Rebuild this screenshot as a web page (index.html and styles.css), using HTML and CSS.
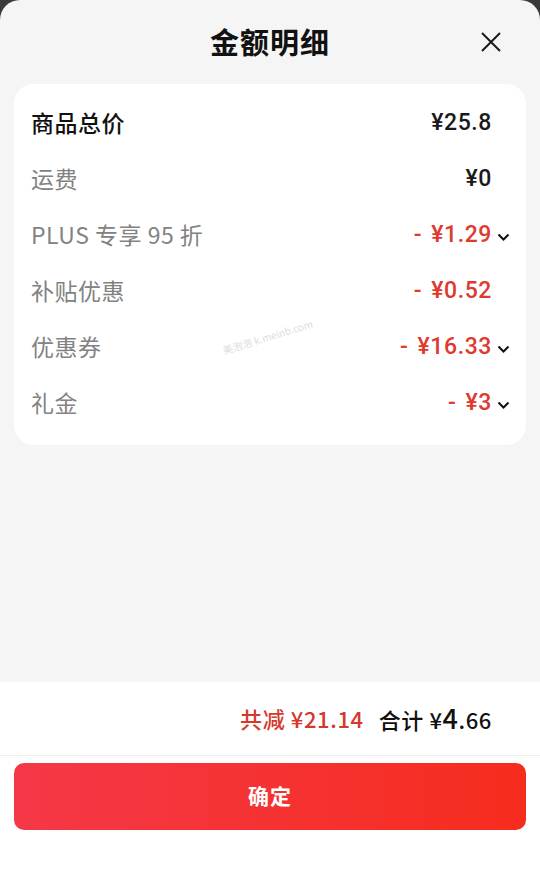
FILE: index.html
```html
<!DOCTYPE html>
<html lang="zh-CN">

<head>
    <meta charset="UTF-8">
    <meta name="viewport" content="width=device-width, initial-scale=1.0">
    <title>金额明细</title>
    <link rel="stylesheet" href="styles.css">
</head>

<body>
    <div class="sheet">
        <div class="head">
            <h1>金额明细</h1>
            <span class="close">
                <svg width="22" height="22" viewBox="0 0 22 22"><path d="M2 2L20 20M20 2L2 20" stroke="#1a1a1a" stroke-width="2" fill="none"/></svg>
            </span>
        </div>

        <div class="card">
            <div class="row main">
                <span class="label">商品总价</span>
                <span class="value">¥25.8</span>
                <span class="arrow"></span>
            </div>
            <div class="row">
                <span class="label">运费</span>
                <span class="value">¥0</span>
                <span class="arrow"></span>
            </div>
            <div class="row">
                <span class="label">PLUS 专享 95 折</span>
                <span class="value red"><i>-</i>¥1.29</span>
                <span class="arrow"><svg width="13" height="8" viewBox="0 0 13 8"><path d="M1.5 1.5l5 5 5-5" stroke="#111" stroke-width="2" fill="none"/></svg></span>
            </div>
            <div class="row">
                <span class="label">补贴优惠</span>
                <span class="value red"><i>-</i>¥0.52</span>
                <span class="arrow"></span>
            </div>
            <div class="row">
                <span class="label">优惠券</span>
                <span class="value red"><i>-</i>¥16.33</span>
                <span class="arrow"><svg width="13" height="8" viewBox="0 0 13 8"><path d="M1.5 1.5l5 5 5-5" stroke="#111" stroke-width="2" fill="none"/></svg></span>
            </div>
            <div class="row">
                <span class="label">礼金</span>
                <span class="value red"><i>-</i>¥3</span>
                <span class="arrow"><svg width="13" height="8" viewBox="0 0 13 8"><path d="M1.5 1.5l5 5 5-5" stroke="#111" stroke-width="2" fill="none"/></svg></span>
            </div>
            <div class="mark">美泡泡 k.meinb.com</div>
        </div>

        <div class="foot">
            <div class="total">
                <span class="cut">共减 ¥21.14</span>
                <span class="sum">合计 ¥<b>4</b>.66</span>
            </div>
            <div class="btn">确定</div>
        </div>
    </div>
</body>

</html>
```

FILE: styles.css
```css
* {
    box-sizing: border-box;
}

body {
    margin: 0;
    background-color: #3a3a3a;
    font-family: "Noto Sans CJK SC", "Noto Sans", sans-serif;
}

.sheet {
    height: 876px;
    display: flex;
    flex-direction: column;
    background-color: #f5f5f5;
    border-radius: 20px 20px 0 0;
    overflow: hidden;
}

.head {
    height: 84px;
    display: flex;
    align-items: center;
    justify-content: center;
    position: relative;
    padding-bottom: 2px;
}

.head h1 {
    margin: 0;
    font-size: 29px;
    font-weight: 700;
    color: #111;
    letter-spacing: 1px;
}

.close {
    position: absolute;
    right: 38px;
    top: 31px;
    line-height: 0;
}

.card {
    position: relative;
    margin: 0 14px;
    padding: 10px 16px 15px 17px;
    background-color: #fff;
    border-radius: 20px;
}

.row {
    height: 56px;
    display: flex;
    align-items: center;
}

.label {
    flex: 1;
    font-size: 23px;
    color: #828282;
    letter-spacing: 0.5px;
}

.value {
    font-family: "Roboto", "Noto Sans CJK SC", sans-serif;
    font-size: 23px;
    font-weight: 500;
    color: #1a1a1a;
    letter-spacing: 0.6px;
}

.value i {
    font-style: normal;
    margin-right: 9px;
}

.red {
    color: #de3a2f;
}

.arrow {
    width: 18px;
    display: flex;
    justify-content: flex-end;
    padding-top: 5px;
}

.main .label {
    color: #111;
    font-weight: 500;
}

.mark {
    position: absolute;
    left: 207px;
    top: 245px;
    font-size: 10px;
    color: #ddd;
    transform: rotate(-17deg);
}

.foot {
    margin-top: auto;
    height: 194px;
    background-color: #fff;
}

.total {
    height: 74px;
    display: flex;
    align-items: center;
    justify-content: flex-end;
    gap: 15px;
    padding-right: 48px;
    padding-bottom: 2px;
    border-bottom: 1px solid #eee;
    font-size: 22px;
    letter-spacing: 0.6px;
}

.cut {
    color: #d5382c;
    font-weight: 500;
}

.sum {
    color: #111;
    font-weight: 500;
}

.sum b {
    font-size: 27px;
    font-weight: 500;
}

.btn {
    margin: 7px 14px 0;
    height: 67px;
    border-radius: 10px;
    background: linear-gradient(90deg, #f53848, #f62c1d);
    color: #fff;
    font-size: 21px;
    font-weight: 700;
    display: flex;
    align-items: center;
    justify-content: center;
    letter-spacing: 1px;
    padding-bottom: 3px;
}
```
